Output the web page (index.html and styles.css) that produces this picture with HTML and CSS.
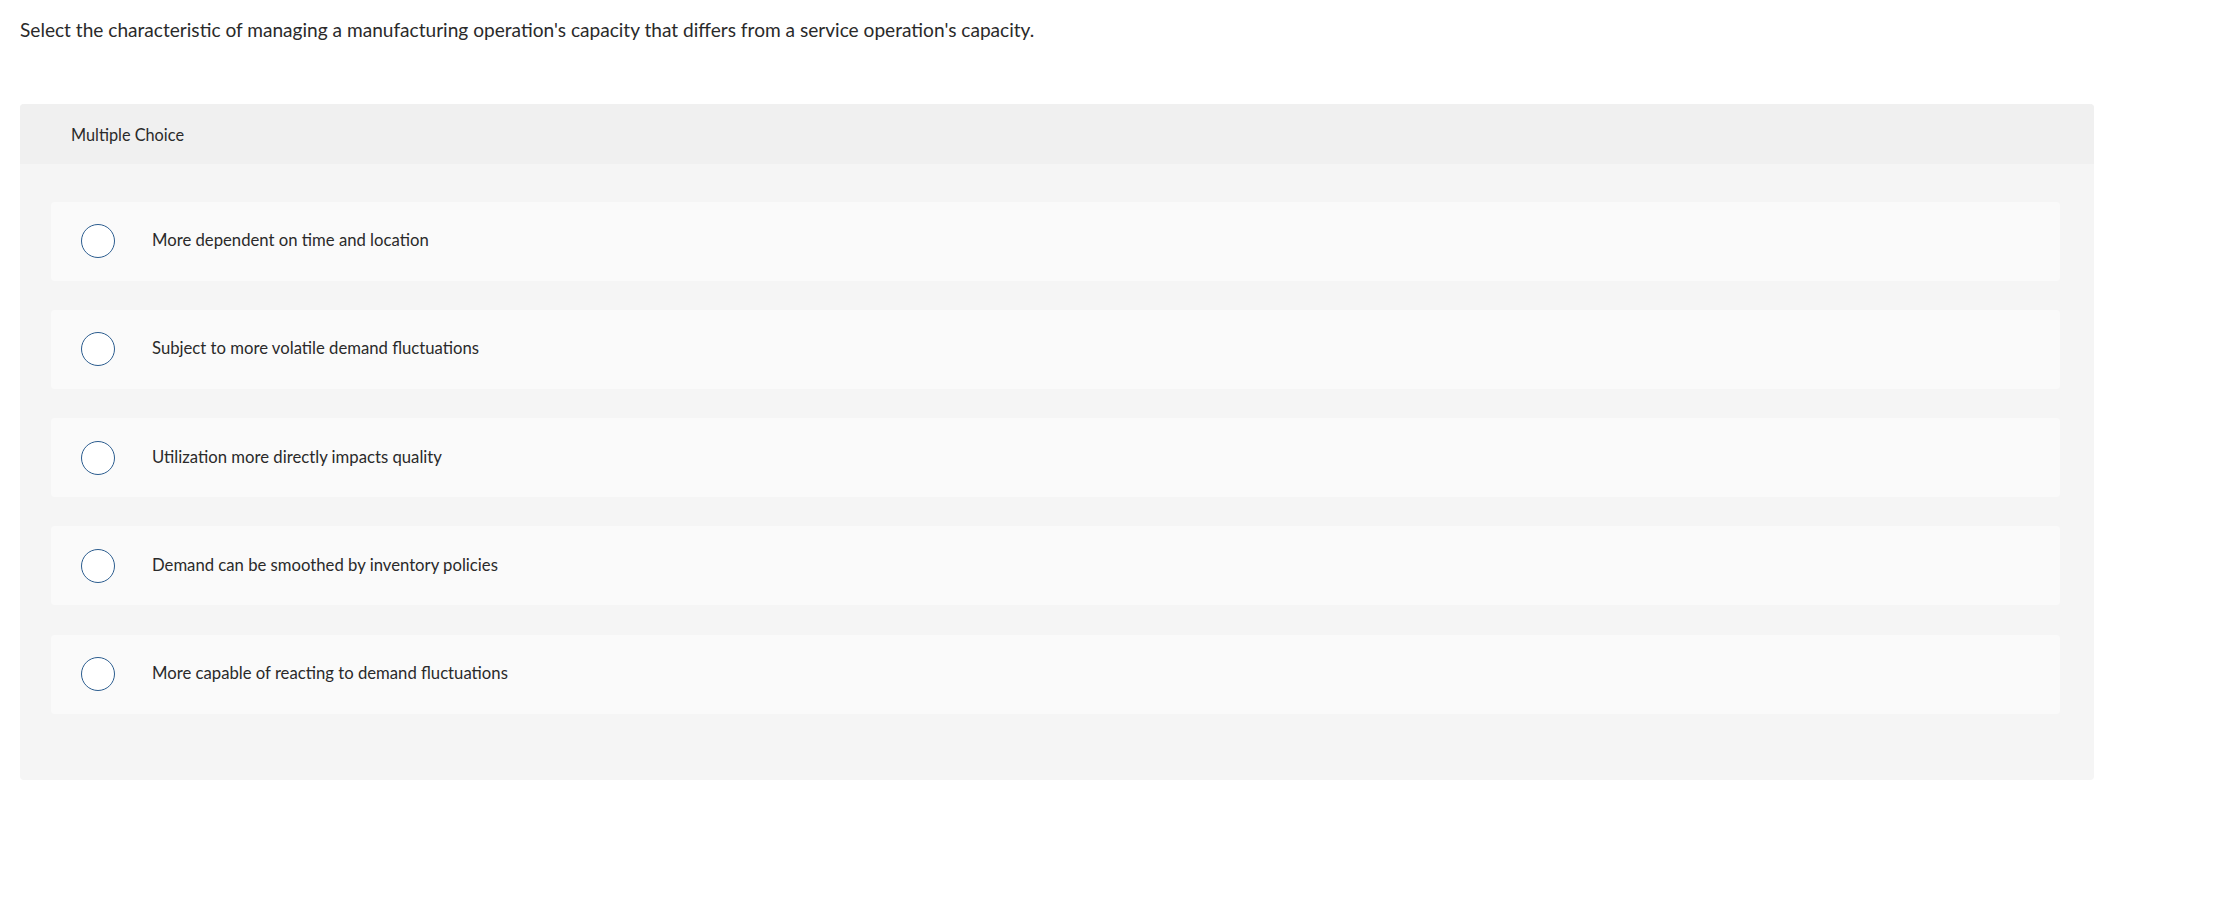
FILE: index.html
```html
<!DOCTYPE html>
<html>
<head>
<meta charset="utf-8">
<link rel="stylesheet" href="styles.css">
</head>
<body>
<div class="page">
  <p class="question">Select the characteristic of managing a manufacturing operation's capacity that differs from a service operation's capacity.</p>
  <div class="panel">
    <div class="panel-head">Multiple Choice</div>
    <div class="options">
      <div class="option"><span class="radio"></span><span class="label">More dependent on time and location</span></div>
      <div class="option"><span class="radio"></span><span class="label">Subject to more volatile demand fluctuations</span></div>
      <div class="option"><span class="radio"></span><span class="label">Utilization more directly impacts quality</span></div>
      <div class="option"><span class="radio"></span><span class="label">Demand can be smoothed by inventory policies</span></div>
      <div class="option"><span class="radio"></span><span class="label">More capable of reacting to demand fluctuations</span></div>
    </div>
  </div>
</div>
</body>
</html>
```
FILE: styles.css
```css
html, body {
  margin: 0;
  padding: 0;
  background: #ffffff;
}
body {
  font-family: Lato, "Liberation Sans", sans-serif;
  color: #1a1a1a;
}
.page {
  padding: 18px 0 0 20px;
  width: 2074px;
}
.question {
  margin: 0;
  font-size: 19.1px;
  line-height: 24px;
  color: #2a2a2a;
}
.panel {
  margin-top: 62px;
  background: #f5f5f5;
  border-radius: 4px;
  overflow: hidden;
}
.panel-head {
  height: 60px;
  background: #f0f0f0;
  display: flex;
  align-items: center;
  padding-left: 51px;
  font-size: 16.3px;
  color: #2a2a2a;
}
.options {
  display: flex;
  flex-direction: column;
  gap: 29.25px;
  padding: 37.5px 34px 66.5px 31px;
}
.option {
  height: 79px;
  background: #fafafa;
  border-radius: 4px;
  display: flex;
  align-items: center;
  padding-left: 30px;
}
.radio {
  width: 32px;
  height: 32px;
  border: 1.3px solid #2c5d8f;
  border-radius: 50%;
  background: #fff;
  flex: none;
}
.label {
  margin-left: 37px;
  font-size: 16.7px;
  line-height: 20px;
  margin-top: -2px;
  color: #2a2a2a;
}
```
